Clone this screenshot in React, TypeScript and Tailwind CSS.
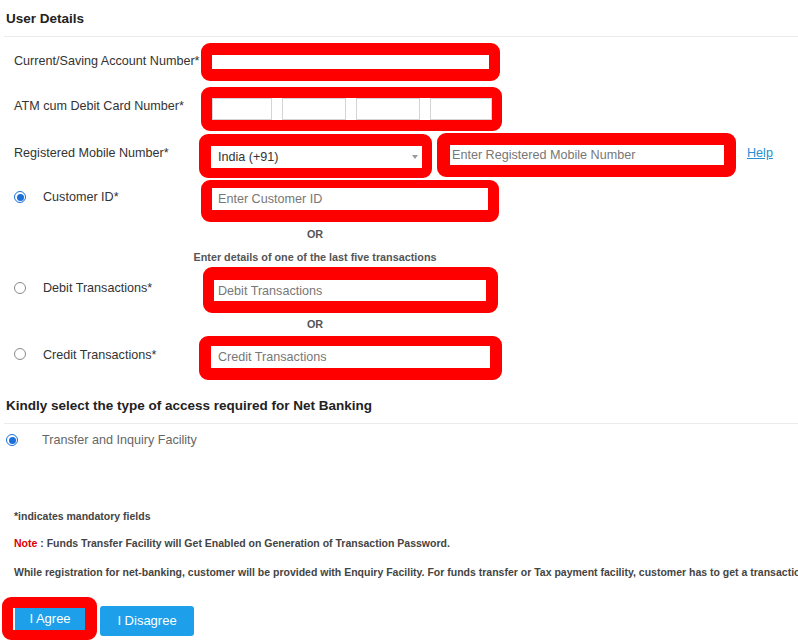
import type { ReactNode } from 'react'

const RED = 'border-[#ff0000]'

interface RadioProps {
  checked?: boolean
}

const Radio = ({ checked = false }: RadioProps) =>
  checked ? (
    <span className="flex h-[12px] w-[12px] items-center justify-center rounded-full border-[1.5px] border-[#1a6fd8] bg-white">
      <span className="h-[7px] w-[7px] rounded-full bg-[#1a6fd8]" />
    </span>
  ) : (
    <span className="block h-[12px] w-[12px] rounded-full border border-[#8a8a8a] bg-white" />
  )

interface RedBoxProps {
  className: string
  children: ReactNode
}

// hand-drawn red highlight round a field
const RedBox = ({ className, children }: RedBoxProps) => (
  <div className={`flex shrink-0 rounded-[9px] ${RED} ${className}`}>{children}</div>
)

const TextField = ({ placeholder, pad = 'pl-[6px]' }: { placeholder?: string; pad?: string }) => (
  <input
    type="text"
    placeholder={placeholder}
    className={`h-full w-full bg-white text-[12.6px] text-[#333] outline-none placeholder:text-[#777] ${pad}`}
  />
)

const labelCls = 'whitespace-nowrap text-[12.6px] leading-[16px]'

export default function App() {
  return (
    <div className="h-[642px] w-[798px] overflow-hidden bg-white font-['Liberation_Sans',Arial,sans-serif] text-[#333]">
      <div className="ml-[4px] border-b border-[#ebebeb] pb-[8px] pl-[2px] pt-[10px] text-[13.5px] font-bold leading-[18px] text-[#222]">
        User Details
      </div>

      {/* account number */}
      <div className="mt-[6px] flex">
        <div className={`w-[201px] pl-[14px] pt-[10px] ${labelCls}`}>Current/Saving Account Number*</div>
        <RedBox className="h-[38px] w-[299px] border-x-[11px] border-y-[12px]">
          <TextField />
        </RedBox>
      </div>

      {/* card number */}
      <div className="mt-[6px] flex">
        <div className={`w-[201px] pl-[14px] pt-[11px] ${labelCls}`}>ATM cum Debit Card Number*</div>
        <RedBox className="h-[44px] w-[301px] border-[11px]">
          <div className="flex h-full w-full gap-[10px] bg-white">
            {[60, 64, 64, 62].map((w, i) => (
              <input
                key={i}
                type="text"
                style={{ width: w }}
                className="h-full border border-[#d4d4d4] bg-white outline-none"
              />
            ))}
          </div>
        </RedBox>
      </div>

      {/* mobile */}
      <div className="mt-[2px] flex items-start">
        <div className={`w-[199px] pl-[14px] pt-[12px] ${labelCls}`}>Registered Mobile Number*</div>
        <RedBox className="mt-[1px] h-[44px] w-[233px] border-b-[10px] border-l-[12px] border-r-[10px] border-t-[12px]">
          <div className="flex h-full w-full items-center justify-between bg-white pl-[7px] pr-[4px] text-[12.6px] text-[#333]">
            <span>India (+91)</span>
            <span className="h-0 w-0 border-x-[3px] border-t-[4px] border-x-transparent border-t-[#999]" />
          </div>
        </RedBox>
        <RedBox className="ml-[5px] h-[44px] w-[299px] border-l-[13px] border-r-[12px] border-y-[12px]">
          <TextField placeholder="Enter Registered Mobile Number" pad="pl-[2px]" />
        </RedBox>
        <a className="ml-[11px] pt-[12px] text-[12.6px] leading-[16px] text-[#2a8fd0] underline">Help</a>
      </div>

      {/* customer id */}
      <div className="mt-[2px] flex">
        <div className={`flex w-[201px] items-start pt-[9px] ${labelCls}`}>
          <div className="ml-[14px] mt-[2px]">
            <Radio checked />
          </div>
          <span className="ml-[17px]">Customer ID*</span>
        </div>
        <RedBox className="h-[42px] w-[298px] border-x-[11px] border-b-[12px] border-t-[8px]">
          <TextField placeholder="Enter Customer ID" />
        </RedBox>
      </div>

      <div className="mt-[5px] w-[630px] text-center text-[10.8px] font-bold leading-[14px] text-[#555]">OR</div>
      <div className="mt-[9px] w-[630px] text-center text-[10.8px] font-bold leading-[14px] text-[#555]">
        Enter details of one of the last five transactions
      </div>

      {/* debit */}
      <div className="mt-[3px] flex">
        <div className={`flex w-[203px] items-start pt-[13px] ${labelCls}`}>
          <div className="ml-[14px] mt-[2px]">
            <Radio />
          </div>
          <span className="ml-[17px]">Debit Transactions*</span>
        </div>
        <RedBox className="h-[46px] w-[295px] border-b-[12px] border-l-[11px] border-r-[12px] border-t-[13px]">
          <TextField placeholder="Debit Transactions" pad="pl-[4px]" />
        </RedBox>
      </div>

      <div className="mt-[4px] w-[630px] text-center text-[10.8px] font-bold leading-[14px] text-[#555]">OR</div>

      {/* credit */}
      <div className="mt-[5px] flex">
        <div className={`flex w-[199px] items-start pt-[11px] ${labelCls}`}>
          <div className="ml-[14px] mt-[1px]">
            <Radio />
          </div>
          <span className="ml-[17px]">Credit Transactions*</span>
        </div>
        <RedBox className="h-[44px] w-[303px] border-x-[12px] border-b-[12px] border-t-[10px]">
          <TextField placeholder="Credit Transactions" pad="pl-[7px]" />
        </RedBox>
      </div>

      <div className="ml-[4px] mt-[17px] border-b border-[#ebebeb] pb-[8px] pl-[2px] text-[13.5px] font-bold leading-[18px] text-[#222]">
        Kindly select the type of access required for Net Banking
      </div>

      <div className="mt-[8px] flex items-center text-[12.6px] leading-[16px] text-[#666]">
        <div className="ml-[6px]">
          <Radio checked />
        </div>
        <span className="ml-[24px]">Transfer and Inquiry Facility</span>
      </div>

      <div className="mt-[61px] pl-[14px] text-[10.5px] font-bold leading-[14px] text-[#444]">
        *indicates mandatory fields
      </div>
      <div className="mt-[13px] pl-[14px] text-[10.5px] font-bold leading-[14px] text-[#444]">
        <span className="text-[#e00000]">Note</span> : Funds Transfer Facility will Get Enabled on Generation of
        Transaction Password.
      </div>
      <div className="mt-[15px] overflow-hidden whitespace-nowrap pl-[14px] text-[10.5px] font-bold leading-[14px] text-[#444]">
        While registration for net-banking, customer will be provided with Enquiry Facility. For funds transfer or Tax
        payment facility, customer has to get a transaction
      </div>

      <div className="mt-[18px] flex items-start">
        <RedBox className="ml-[2px] h-[43px] w-[95px] border-b-[10px] border-l-[11px] border-r-[12px] border-t-[11px]">
          <button
            type="button"
            className="h-full w-full border-l-2 border-white bg-[#1e9fea] text-[13px] text-white"
          >
            I Agree
          </button>
        </RedBox>
        <button
          type="button"
          className="ml-[3px] mt-[9px] h-[30px] w-[94px] rounded-[3px] bg-[#1e9fea] text-[13px] text-white"
        >
          I Disagree
        </button>
      </div>
    </div>
  )
}
